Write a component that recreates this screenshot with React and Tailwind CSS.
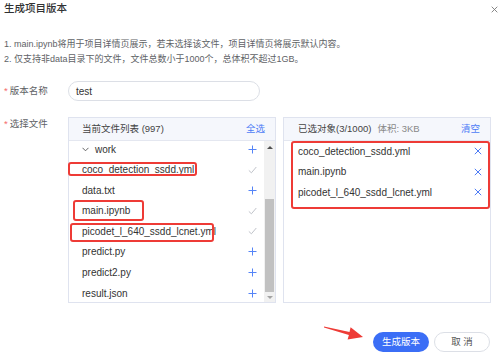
import React from 'react';

const files = [
  { name: 'work', folder: true, picked: false },
  { name: 'coco_detection_ssdd.yml', picked: true },
  { name: 'data.txt', picked: false },
  { name: 'main.ipynb', picked: true },
  { name: 'picodet_l_640_ssdd_lcnet.yml', picked: true },
  { name: 'predict.py', picked: false },
  { name: 'predict2.py', picked: false },
  { name: 'result.json', picked: false },
];

const selected = ['coco_detection_ssdd.yml', 'main.ipynb', 'picodet_l_640_ssdd_lcnet.yml'];

const Plus = () => (
  <svg width="9" height="9" viewBox="0 0 9 9" className="text-[#5584f7]">
    <path d="M4.5 0.5v8M0.5 4.5h8" stroke="currentColor" strokeWidth="1" />
  </svg>
);

const Check = () => (
  <svg width="9" height="8" viewBox="0 0 9 8" className="text-[#b9bcc4]">
    <path d="M0.8 4.4l2.6 2.4L8.3 1" fill="none" stroke="currentColor" strokeWidth="0.9" />
  </svg>
);

const Cross = ({ size = 8, color = 'text-[#4d7cf6]' }) => (
  <svg width={size} height={size} viewBox="0 0 8 8" className={color}>
    <path d="M0.8 0.8l6.4 6.4M7.2 0.8l-6.4 6.4" stroke="currentColor" strokeWidth="1" />
  </svg>
);

const App = () => {
  return (
    <div
      className="relative w-[500px] h-[352px] overflow-hidden bg-white text-[#333]"
      style={{ fontFamily: '"Liberation Sans", "Noto Sans CJK SC", sans-serif' }}
    >
      {/* Title */}
      <div className="flex items-center justify-between h-[18px] pl-[4px] pr-[2px]">
        <span className="text-[10.5px] font-medium text-[#303133]">生成项目版本</span>
        <Cross size={7} color="text-[#777]" />
      </div>

      {/* Notes */}
      <div className="mt-[18.5px] pl-[4px] text-[9px] leading-[15px] text-[#606266]">
        <p>1. main.ipynb将用于项目详情页展示，若未选择该文件，项目详情页将展示默认内容。</p>
        <p>2. 仅支持非data目录下的文件，文件总数小于1000个，总体积不超过1GB。</p>
      </div>

      {/* Version name */}
      <div className="flex items-center mt-[14.5px]">
        <div className="w-[68px] pl-[4px] text-[9.5px] text-[#606266]">
          <span className="text-[#f56c6c] mr-[2px]">*</span>版本名称
        </div>
        <div className="w-[192px] h-[20px] rounded-full border border-[#dcdfe6] pl-[7px] flex items-center text-[10px] text-[#333]">
          test
        </div>
      </div>

      {/* Files */}
      <div className="flex mt-[16px]">
        <div className="w-[68px] pl-[4px] pt-[1px] text-[9.5px] text-[#606266] leading-[12px]">
          <span className="text-[#f56c6c] mr-[2px]">*</span>选择文件
        </div>

        <div className="flex gap-[7px]">
          {/* left panel */}
          <div className="w-[208px] h-[186px] border border-[#dfe3ef] flex flex-col">
            <div className="h-[23px] shrink-0 bg-[#f5f7fc] border-b border-[#e4e7f0] flex items-center justify-between pl-[13px] pr-[10px] text-[9.5px]">
              <span className="text-[#444]">当前文件列表 (997)</span>
              <span className="text-[#4d7cf6]">全选</span>
            </div>
            <div className="flex flex-1 min-h-0">
              <div className="flex-1 overflow-hidden">
                <div className="-mt-[2.3px]">
                  {files.map((f) => (
                    <div key={f.name} className="h-[20.6px] flex items-center justify-between pl-[13px] pr-[7px] text-[10px] text-[#333]">
                      {f.folder ? (
                        <span className="flex items-center">
                          <svg width="7" height="5" viewBox="0 0 7 5" className="mr-[6px] text-[#555]">
                            <path d="M0.5 0.8l3 3 3-3" fill="none" stroke="currentColor" strokeWidth="0.9" />
                          </svg>
                          {f.name}
                        </span>
                      ) : (
                        <span>{f.name}</span>
                      )}
                      {f.picked ? <Check /> : <Plus />}
                    </div>
                  ))}
                </div>
              </div>
              {/* scrollbar */}
              <div className="w-[11px] bg-[#f1f1f1] flex flex-col items-center">
                <div className="h-[12px] flex items-center justify-center">
                  <div className="w-0 h-0 border-l-[3px] border-r-[3px] border-b-[3px] border-l-transparent border-r-transparent border-b-[#505050]" />
                </div>
                <div className="mt-[46px] w-[9px] h-[93px] bg-[#c1c1c1]" />
                <div className="flex-1 flex items-center justify-center">
                  <div className="w-0 h-0 border-l-[3px] border-r-[3px] border-t-[3px] border-l-transparent border-r-transparent border-t-[#a3a3a3]" />
                </div>
              </div>
            </div>
          </div>

          {/* right panel */}
          <div className="w-[208px] h-[186px] border border-[#dfe3ef] flex flex-col">
            <div className="h-[23px] shrink-0 bg-[#f5f7fc] border-b border-[#e4e7f0] flex items-center justify-between pl-[14px] pr-[10px] text-[9.5px]">
              <span className="text-[#444]">
                已选对象(3/1000)<span className="ml-[6px] text-[#888]">体积: 3KB</span>
              </span>
              <span className="text-[#4d7cf6]">清空</span>
            </div>
            <div>
              {selected.map((s) => (
                <div key={s} className="h-[20.5px] flex items-center justify-between pl-[14px] pr-[8px] text-[10px] text-[#333]">
                  <span>{s}</span>
                  <Cross size={8} />
                </div>
              ))}
            </div>
          </div>
        </div>
      </div>

      {/* footer */}
      <div className="flex justify-end gap-[5px] pr-[10px] mt-[29px]">
        <button className="w-[56px] h-[20px] rounded-full bg-[#3b6ef6] text-white text-[9.5px]">生成版本</button>
        <button className="w-[56px] h-[20px] rounded-full border border-[#dcdfe6] bg-white text-[#555] text-[9.5px]">取 消</button>
      </div>

      {/* annotations */}
      <div className="absolute left-[68px] top-[162px] w-[129px] h-[14px] border-2 border-[#ee3b36] rounded-[3px]" />
      <div className="absolute left-[73px] top-[200px] w-[71px] h-[21px] border-2 border-[#ee3b36] rounded-[3px]" />
      <div className="absolute left-[70px] top-[223px] w-[144px] h-[19px] border-2 border-[#ee3b36] rounded-[3px]" />
      <div className="absolute left-[291px] top-[141px] w-[199px] h-[68px] border-2 border-[#ee3b36] rounded-[3px]" />
      <svg className="absolute left-[320px] top-[318px]" width="50" height="26" viewBox="0 0 50 26">
        <polygon points="4,8.5 29.5,14 30.6,9.2 43,19 27.6,21.6 28.9,17 4,9.5" fill="#ee3b36" />
      </svg>
    </div>
  );
};

export default App;
